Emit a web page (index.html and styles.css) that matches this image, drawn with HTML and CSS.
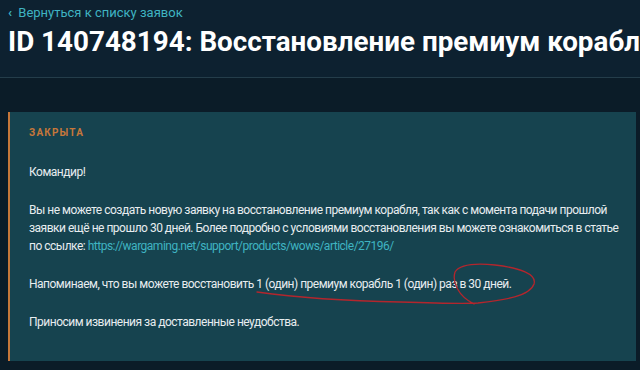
FILE: index.html
```html
<!DOCTYPE html>
<html lang="ru">
<head>
    <meta charset="UTF-8">
    <meta name="viewport" content="width=device-width, initial-scale=1.0">
    <title>ID 140748194</title>
    <link rel="stylesheet" href="styles.css">
</head>
<body>
    <div class="page-head">
        <a class="back-link" href="#"><span class="chevron">‹</span> Вернуться к списку заявок</a>
        <h1 class="ticket-title">ID 140748194: Восстановление премиум корабля</h1>
    </div>

    <div class="ticket">
        <div class="ticket-status">Закрыта</div>
        <div class="ticket-body">
            <p>Командир!</p>
            <p>Вы не можете создать новую заявку на восстановление премиум корабля, так как с момента подачи прошлой заявки ещё не прошло 30 дней. Более подробно с условиями восстановления вы можете ознакомиться в статье по ссылке: <a href="#">https://wargaming.net/support/products/wows/article/27196/</a></p>
            <p>Напоминаем, что вы можете восстановить 1 (один) премиум корабль 1 (один) раз в 30 дней.</p>
            <p>Приносим извинения за доставленные неудобства.</p>
        </div>

        <!-- red marker scribble from the screenshot -->
        <svg class="scribble" width="640" height="370" viewBox="0 0 640 370">
            <path d="M257 292 C 300 298, 350 301, 400 302 C 430 303, 460 304, 478 303 C 505 300, 530 296, 534 284 C 537 274, 520 268, 495 265 C 475 263, 460 264, 455 272 C 452 282, 458 296, 474 304"
                  fill="none" stroke="#b3262d" stroke-width="1.3" stroke-linecap="round"/>
        </svg>
    </div>
</body>
</html>
```

FILE: styles.css
```css
body {
    margin: 0;
    padding: 0;
    background-color: #0b1c28;
    font-family: Roboto, "Liberation Sans", sans-serif;
    color: #e3e8ea;
    overflow: hidden;
}

.page-head {
    background-color: #0d2130;
    padding: 2px 0 0 8px;
    height: 75px;
    border-bottom: 1px solid #243d4a;
    box-sizing: content-box;
    overflow: hidden;
}

.back-link {
    display: inline-block;
    color: #3fb4c2;
    font-size: 13px;
    text-decoration: none;
    line-height: 18px;
}

.chevron {
    font-weight: bold;
    margin-right: 3px;
}

.ticket-title {
    margin: 2px 0 0;
    font-size: 27.8px;
    font-weight: 700;
    color: #ffffff;
    white-space: nowrap;
    line-height: 36px;
}

.ticket {
    position: relative;
    margin: 34px 4px 0 8px;
    background-color: #16434f;
    border-left: 2px solid #c7773a;
    padding: 14px 12px 30px 19px;
}

.ticket-status {
    color: #c7773a;
    font-size: 10px;
    font-weight: 700;
    letter-spacing: 1.2px;
    text-transform: uppercase;
    line-height: 14px;
}

.ticket-body {
    margin-top: 23px;
    font-size: 12px;
    letter-spacing: -0.5px;
    line-height: 18px;
    color: #e8edef;
}

.ticket-body p {
    margin: 0 0 20px;
}

.ticket-body p:last-child {
    margin-bottom: 0;
}

.ticket-body a {
    color: #3fb4c2;
    text-decoration: none;
}

.scribble {
    position: absolute;
    left: -10px;
    top: -112px;
    pointer-events: none;
}
```
